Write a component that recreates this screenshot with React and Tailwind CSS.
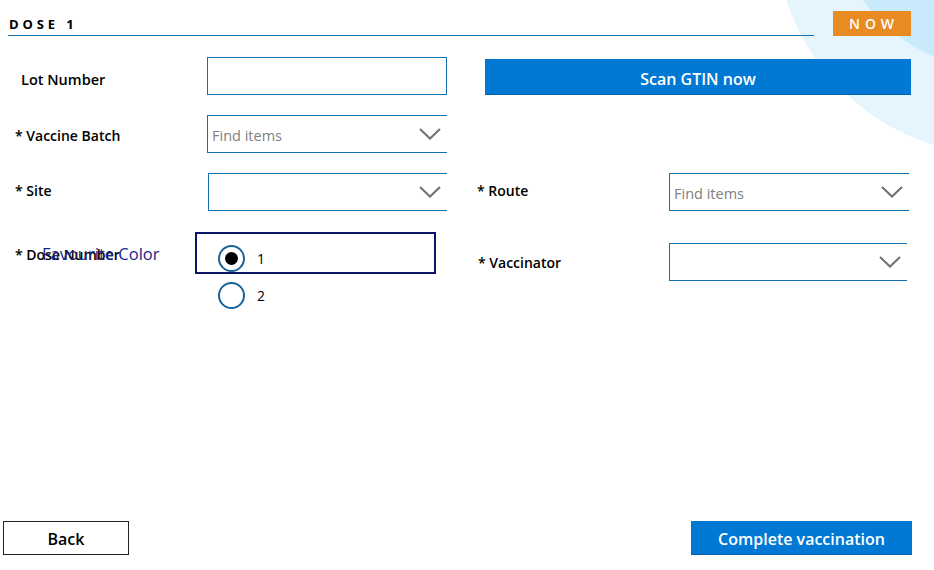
import React from "react";

const FONT = { fontFamily: '"Open Sans", "Noto Sans", "Liberation Sans", sans-serif' };

function Chevron() {
  return (
    <svg width="22" height="12" viewBox="0 0 22 12" className="shrink-0">
      <polyline points="1,1 11,10.5 21,1" fill="none" stroke="#707070" strokeWidth="2" />
    </svg>
  );
}

function Dropdown({ placeholder, className = "" }) {
  return (
    <div
      className={`flex h-[38px] items-center justify-between border-y border-l border-[#1070b0] pl-[4px] pr-[6px] ${className}`}
    >
      <span className="pt-[3px] text-[14.5px] text-[#808080]">{placeholder}</span>
      <Chevron />
    </div>
  );
}

function Radio({ checked, label }) {
  return (
    <div className="flex h-[26px] items-center">
      <div className="flex h-[27px] w-[27px] items-center justify-center rounded-full border-2 border-[#1a6398]">
        {checked && <div className="h-[13px] w-[13px] rounded-full bg-black" />}
      </div>
      <span className="ml-[12px] text-[14px] text-black">{label}</span>
    </div>
  );
}

export default function App() {
  return (
    <div className="relative h-[570px] w-[934px] overflow-hidden bg-white text-black" style={FONT}>
      {/* decorative background circles */}
      <div className="pointer-events-none absolute left-[775px] top-[-295px] h-[450px] w-[450px] rounded-full bg-[#e5f5fd]" />
      <div className="pointer-events-none absolute left-[830px] top-[-270px] h-[340px] w-[340px] rounded-full bg-[#c8eafb]" />

      <div className="relative flex h-full flex-col">
        {/* header */}
        <div className="flex items-end pt-[10px] pl-[8px] pr-[23px]">
          <div className="flex h-[26px] flex-1 items-end border-b border-[#1070b0] pb-[4px] pl-[1px]">
            <span className="text-[13px] font-bold leading-none tracking-[0.3em] text-black">DOSE 1</span>
          </div>
          <div className="ml-[19px] flex h-[25px] w-[78px] items-center justify-center bg-[#e88b22] pl-[4px] text-[14px] font-semibold tracking-[0.35em] text-white">
            NOW
          </div>
        </div>

        {/* row 1 */}
        <div className="mt-[21px] flex items-start">
          <div className="flex h-[38px] w-[207px] items-center pl-[21px] pt-[7px] text-[14.5px] font-semibold">Lot Number</div>
          <div className="h-[38px] w-[240px] border border-[#1070b0]" />
          <button className="ml-[38px] mt-[2px] flex h-[36px] w-[426px] items-center justify-center bg-[#0078d4] pt-[3px] text-[16px] font-semibold text-white shadow-[inset_0_-1px_0_#0060aa]">
            Scan GTIN now
          </button>
        </div>

        {/* row 2 */}
        <div className="mt-[20px] flex items-center">
          <div className="w-[207px] pl-[15px] pt-[2px] text-[14px] font-semibold">* Vaccine Batch</div>
          <Dropdown placeholder="Find items" className="w-[240px]" />
        </div>

        {/* row 3 */}
        <div className="mt-[20px] flex items-center">
          <div className="w-[208px] pb-[4px] pl-[15px] text-[14px] font-semibold">* Site</div>
          <Dropdown className="w-[239px]" />
          <div className="ml-[30px] w-[192px] pb-[4px] text-[14px] font-semibold">* Route</div>
          <Dropdown placeholder="Find items" className="w-[240px]" />
        </div>

        {/* row 4 */}
        <div className="mt-[21px] flex items-start">
          <div className="relative h-[80px] w-[447px]">
            <div className="pl-[15px] pt-[12px] text-[14px] font-semibold">* Dose Number</div>
            <div className="absolute left-[42px] top-[10px] text-[16.5px] text-[#17268a]">Favourite Color</div>
            <div className="absolute left-[195px] top-0 h-[42px] w-[241px] border-2 border-[#0b1766]" />
            <div className="absolute left-[218px] top-[13px] flex flex-col gap-[11px]">
              <Radio checked label="1" />
              <Radio label="2" />
            </div>
          </div>
          <div className="ml-[31px] mt-[11px] flex items-center">
            <div className="w-[191px] text-[14px] font-semibold">* Vaccinator</div>
            <Dropdown className="w-[238px]" />
          </div>
        </div>

        {/* footer */}
        <div className="mt-auto mb-[15px] flex items-center justify-between pl-[3px] pr-[22px]">
          <button className="flex h-[34px] w-[126px] items-center justify-center border border-[#222] bg-white pt-[1px] text-[16px] font-semibold text-black">
            Back
          </button>
          <button className="flex h-[34px] w-[221px] items-center justify-center bg-[#0078d4] pt-[1px] text-[16px] font-semibold text-white shadow-[inset_0_-1px_0_#0060aa]">
            Complete vaccination
          </button>
        </div>
      </div>
    </div>
  );
}
